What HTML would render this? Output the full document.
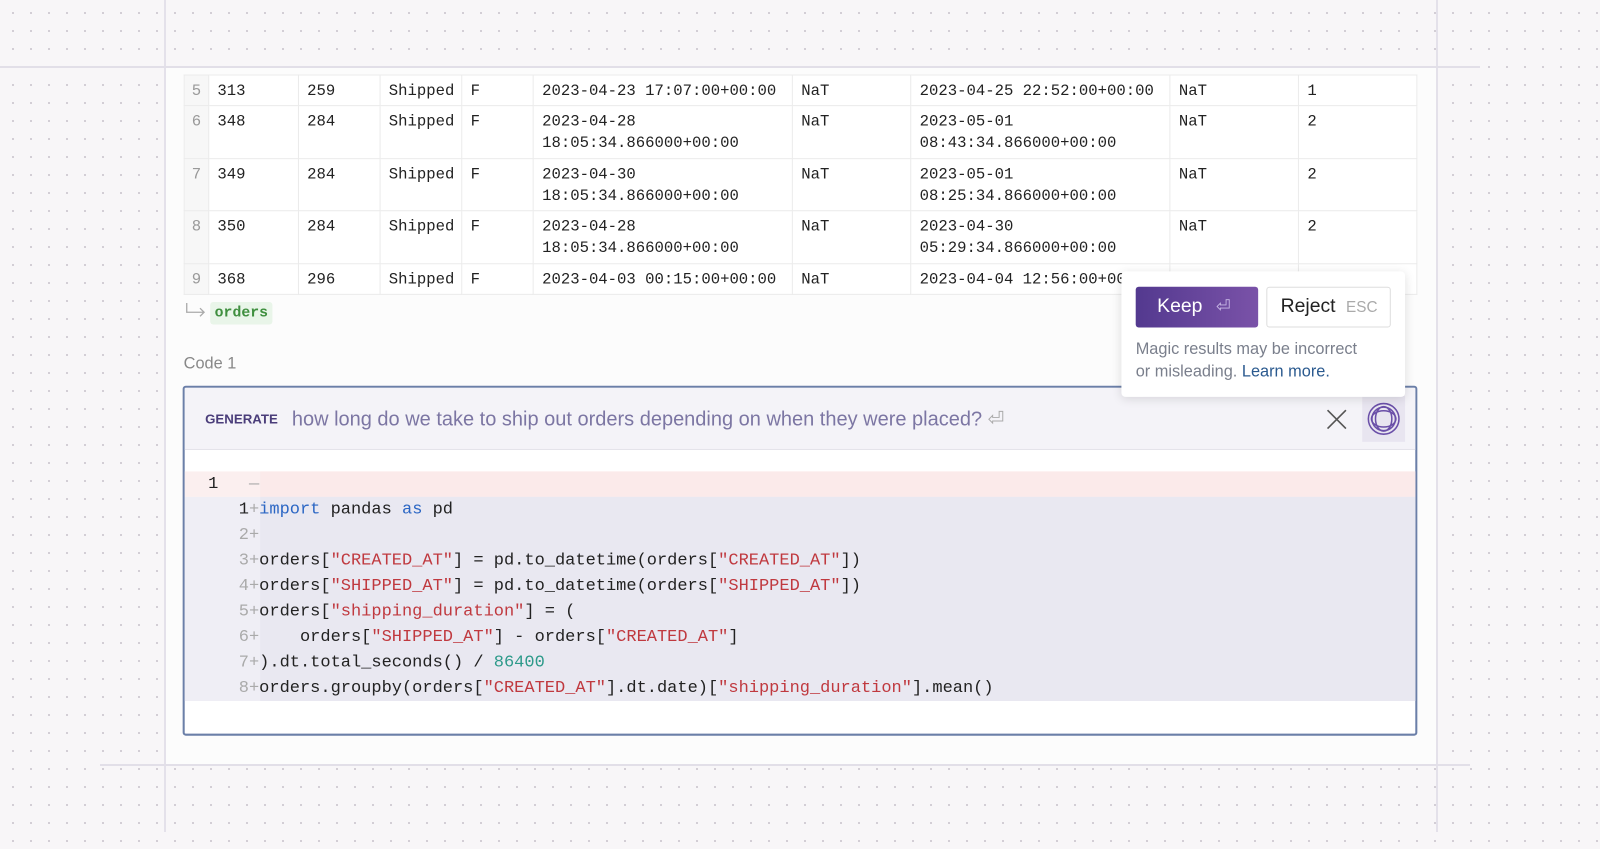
<!DOCTYPE html>
<html><head><meta charset="utf-8"><style>
*{box-sizing:border-box;margin:0;padding:0}
body{width:1600px;height:832px;overflow:hidden;position:relative;background-color:#f8f6f8;background-image:radial-gradient(circle,#cdc8d0 0.9px,transparent 1.2px);background-size:18px 18px;background-position:4px 4px;font-family:"Liberation Sans",sans-serif}
.vl{position:absolute;top:0;height:832px;width:2px;background:#e4e1ea}
.hl{position:absolute;height:2px;background:#e2dfe8}
.panel{position:absolute;left:166px;top:68px;width:1270px;height:697px;background:#fcfcfc}
.mono{font-family:"Liberation Mono",monospace}
.wrap{position:absolute;left:0;top:0;width:1600px;height:832px;transform:scale(1.0204);transform-origin:0 0}
table{position:absolute;left:180px;top:73px;border-collapse:collapse;background:#fff;font-family:"Liberation Mono",monospace;font-size:15.3px;color:#222}
td{border:1px solid #ebebeb;vertical-align:top;padding:5px 7px 0 8px;line-height:21px}
td.n{background:#f7f7f7;color:#999;text-align:center;padding:5px 4px 0}
.abs{position:absolute}
.code{font-family:"Liberation Mono",monospace;font-size:16.67px;color:#222;white-space:pre;line-height:25px}
.s{color:#c0393f}.k{color:#2b66c4}.num{color:#2d9a8a}.g{color:#aaa}
</style></head><body>
<div class="vl" style="left:164px"></div>
<div class="vl" style="left:1436px"></div>
<div class="panel"></div>
<div class="hl" style="left:0;top:66px;width:1480px"></div>
<div class="hl" style="left:100px;top:764px;width:1370px"></div>
<div class="wrap">
<table>
<colgroup><col style="width:24px"><col style="width:88px"><col style="width:80px"><col style="width:80px"><col style="width:70px"><col style="width:254px"><col style="width:116px"><col style="width:254px"><col style="width:126px"><col style="width:116px"></colgroup>
<tr style="height:30px"><td class="n">5</td><td>313</td><td>259</td><td>Shipped</td><td>F</td><td>2023-04-23 17:07:00+00:00</td><td>NaT</td><td>2023-04-25 22:52:00+00:00</td><td>NaT</td><td>1</td></tr>
<tr style="height:52px"><td class="n">6</td><td>348</td><td>284</td><td>Shipped</td><td>F</td><td>2023-04-28<br>18:05:34.866000+00:00</td><td>NaT</td><td>2023-05-01<br>08:43:34.866000+00:00</td><td>NaT</td><td>2</td></tr>
<tr style="height:51px"><td class="n">7</td><td>349</td><td>284</td><td>Shipped</td><td>F</td><td>2023-04-30<br>18:05:34.866000+00:00</td><td>NaT</td><td>2023-05-01<br>08:25:34.866000+00:00</td><td>NaT</td><td>2</td></tr>
<tr style="height:52px"><td class="n">8</td><td>350</td><td>284</td><td>Shipped</td><td>F</td><td>2023-04-28<br>18:05:34.866000+00:00</td><td>NaT</td><td>2023-04-30<br>05:29:34.866000+00:00</td><td>NaT</td><td>2</td></tr>
<tr style="height:30px"><td class="n">9</td><td>368</td><td>296</td><td>Shipped</td><td>F</td><td>2023-04-03 00:15:00+00:00</td><td>NaT</td><td>2023-04-04 12:56:00+00:00</td><td>NaT</td><td>2</td></tr>
</table>
<svg class="abs" style="left:181px;top:296px" width="22" height="16" viewBox="0 0 22 16"><path d="M2 1V10H19M15 6L19 10L15 14" fill="none" stroke="#aaa" stroke-width="1.3"/></svg>
<div class="abs mono" style="left:206px;top:296px;width:61px;height:22px;background:#e9f5e9;color:#3f8f3f;font-size:14.5px;font-weight:bold;line-height:22px;text-align:center;border-radius:3px">orders</div>
<div class="abs" style="left:180px;top:348px;color:#888;font-size:16px">Code 1</div>
<div class="abs" style="left:179px;top:378px;width:1210px;height:343px;border:2px solid #6b7fa8;border-radius:3px;background:#fff;overflow:hidden">
 <div class="abs" style="left:0;top:0;width:1210px;height:61px;background:#f4f3f8;border-bottom:1px solid #e4e3ea"></div>
 <div class="abs" style="left:20px;top:23px;font-size:13px;font-weight:bold;color:#4a3d7a">GENERATE</div>
 <div class="abs" style="left:105px;top:19px;font-size:19.6px;color:#7c76a3">how long do we take to ship out orders depending on when they were placed? <span style="color:#aaa">⏎</span></div>
 <svg class="abs" style="left:1119px;top:21px" width="20" height="20" viewBox="0 0 20 20"><path d="M1 1L19 19M19 1L1 19" stroke="#555" stroke-width="1.6"/></svg>
 <div class="abs" style="left:1154px;top:8px;width:42px;height:45px;background:#e8e5f0">
  <svg width="42" height="45" viewBox="0 0 42 45"><g fill="none" stroke="#6a4fa8" stroke-width="1.5"><circle cx="21" cy="22.5" r="15"/><circle cx="21" cy="22.5" r="11.5"/><ellipse cx="21" cy="22.5" rx="12" ry="8"/><ellipse cx="21" cy="22.5" rx="8" ry="12"/></g></svg>
 </div>
 <div class="abs" style="left:0;top:82px;width:1210px;height:25px;background:#fbefef"></div>
 <div class="abs" style="left:74px;top:82px;width:1136px;height:25px;background:#fbeaea"></div>
 <div class="abs" style="left:0;top:107px;width:1210px;height:200px;background:#efeef5"></div>
 <div class="abs" style="left:74px;top:107px;width:1136px;height:200px;background:#e9e8f1"></div>
 <div class="abs code" style="left:23px;top:82px">1   <span class="g">—</span></div>
 <div class="abs code" style="left:53px;top:107px">1<span class="g">+</span><span class="k">import</span> pandas <span class="k">as</span> pd
<span class="g">2+</span>
<span class="g">3+</span>orders[<span class="s">"CREATED_AT"</span>] = pd.to_datetime(orders[<span class="s">"CREATED_AT"</span>])
<span class="g">4+</span>orders[<span class="s">"SHIPPED_AT"</span>] = pd.to_datetime(orders[<span class="s">"SHIPPED_AT"</span>])
<span class="g">5+</span>orders[<span class="s">"shipping_duration"</span>] = (
<span class="g">6+</span>    orders[<span class="s">"SHIPPED_AT"</span>] - orders[<span class="s">"CREATED_AT"</span>]
<span class="g">7+</span>).dt.total_seconds() / <span class="num">86400</span>
<span class="g">8+</span>orders.groupby(orders[<span class="s">"CREATED_AT"</span>].dt.date)[<span class="s">"shipping_duration"</span>].mean()</div>
</div>
<div class="abs" style="left:1099px;top:266px;width:278px;height:123px;background:#fff;border-radius:4px;box-shadow:0 2px 10px rgba(0,0,0,.12)">
 <div class="abs" style="left:14px;top:15px;width:120px;height:40px;border-radius:3px;background:linear-gradient(90deg,#53398f,#7a52a8);color:#fff;font-size:19px;line-height:40px;padding-left:21px">Keep <span style="color:#c9b9e6;font-size:17px;margin-left:8px">⏎</span></div>
 <div class="abs" style="left:142px;top:15px;width:122px;height:40px;border-radius:3px;border:1px solid #ddd;background:#fff;color:#222;font-size:19px;line-height:38px;padding-left:13px">Reject <span style="color:#aaa;font-size:15px;margin-left:5px">ESC</span></div>
 <div class="abs" style="left:14px;top:66px;width:232px;font-size:16px;line-height:22px;color:#7a7f8c">Magic results may be incorrect or misleading. <span style="color:#2b5a8f">Learn more.</span></div>
</div>
</div>
</body></html>
